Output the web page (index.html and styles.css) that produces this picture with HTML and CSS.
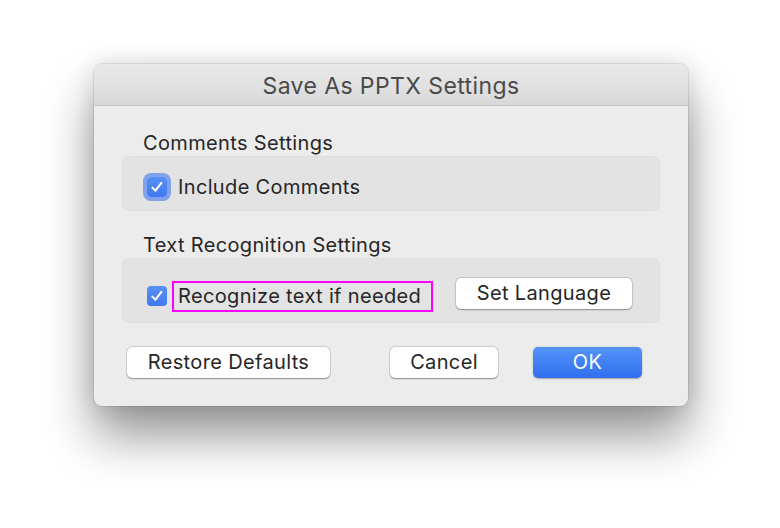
FILE: index.html
```html
<!DOCTYPE html>
<html>
<head>
<meta charset="utf-8">
<link rel="stylesheet" href="styles.css">
</head>
<body>
<div class="dialog">
  <div class="titlebar">Save As PPTX Settings</div>
  <div class="content">
    <div class="label">Comments Settings</div>
    <div class="group group-comments">
      <label class="check-row">
        <span class="checkbox focused">
          <svg viewBox="0 0 20 20" width="20" height="20"><path d="M5.4 10.6 L8.5 13.7 L14.4 5.9" fill="none" stroke="#fff" stroke-width="2" stroke-linecap="round" stroke-linejoin="round"/></svg>
        </span>
        <span class="check-text">Include Comments</span>
      </label>
    </div>
    <div class="label label-second">Text Recognition Settings</div>
    <div class="group group-text">
      <span class="checkbox">
        <svg viewBox="0 0 20 20" width="20" height="20"><path d="M5.4 10.6 L8.5 13.7 L14.4 5.9" fill="none" stroke="#fff" stroke-width="2" stroke-linecap="round" stroke-linejoin="round"/></svg>
      </span>
      <span class="highlight">Recognize text if needed</span>
      <button class="btn btn-lang">Set Language</button>
    </div>
    <div class="actions">
      <button class="btn btn-restore">Restore Defaults</button>
      <button class="btn btn-cancel">Cancel</button>
      <button class="btn btn-ok">OK</button>
    </div>
  </div>
</div>
</body>
</html>
```
FILE: styles.css
```css
* { box-sizing: border-box; }
html, body { margin: 0; background: #ffffff; }
body {
  min-height: 528px;
  padding: 64px 0 0 94px;
  font-family: "Inter", "Liberation Sans", Arial, sans-serif;
  color: #262626;
}
.dialog {
  width: 594px;
  height: 342px;
  background: #ececec;
  border-radius: 8px;
  box-shadow: 0 30px 50px rgba(0,0,0,0.42), 0 0 22px rgba(0,0,0,0.12), 0 0 0 1px rgba(0,0,0,0.08);
}
.titlebar {
  height: 42px;
  border-bottom: 1px solid #c4c4c4;
  border-radius: 8px 8px 0 0;
  background: linear-gradient(#e9e9e9, #d9d9d9);
  text-align: center;
  font-size: 23px;
  line-height: 45px;
  color: #4a4a4a;
  letter-spacing: 0.4px;
}
.content {
  padding: 0 28px;
}
.label {
  margin-top: 25px;
  padding-left: 21px;
  font-size: 20px;
  line-height: 24px;
  letter-spacing: 0.35px;
}
.label-second { margin-top: 22px; }
.group {
  margin-top: 1px;
  background: #e3e3e3;
  border: 1px solid #dedede;
  border-radius: 7px;
  display: flex;
  align-items: center;
  padding-left: 24px;
}
.group-comments { height: 55px; padding-top: 7px; }
.group-text { height: 65px; padding-top: 11px; }
.check-row { display: flex; align-items: center; }
.checkbox {
  width: 20px;
  height: 20px;
  border-radius: 4px;
  background: linear-gradient(#5990f5, #3f79ee);
  display: flex;
  flex: none;
}
.checkbox.focused {
  box-shadow: 0 0 0 4px rgba(96,140,238,0.75);
}
.check-text {
  margin-left: 11px;
  font-size: 20px;
  letter-spacing: 0.35px;
}
.highlight {
  margin-left: 5px;
  border: 2px solid #ff00ff;
  width: 261px;
  height: 31px;
  padding-left: 4px;
  font-size: 20px;
  line-height: 27px;
  letter-spacing: 0.35px;
}
.btn {
  font-family: inherit;
  font-size: 20px;
  color: #262626;
  background: #ffffff;
  border: none;
  border-radius: 5px;
  height: 31px;
  padding: 0 0 1px;
  box-shadow: 0 0.5px 1.5px rgba(0,0,0,0.35), 0 0 0 0.5px rgba(0,0,0,0.15);
  letter-spacing: 0.35px;
}
.btn-lang { margin-left: 23px; width: 176px; margin-top: -5px; }
.actions {
  display: flex;
  margin-top: 24px;
  padding-left: 5px;
}
.btn-restore { width: 203px; }
.btn-cancel { width: 108px; margin-left: 60px; }
.btn-ok {
  width: 109px;
  margin-left: 35px;
  background: linear-gradient(#5493f8, #2f6fef);
  color: #ffffff;
  box-shadow: 0 0.5px 1.5px rgba(0,0,0,0.3);
}
```
